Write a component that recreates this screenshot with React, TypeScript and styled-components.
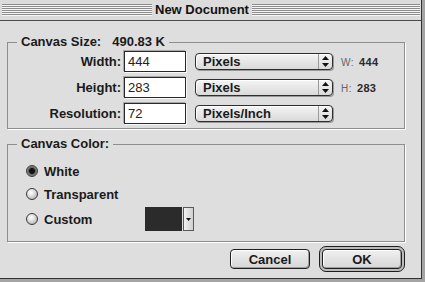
import React from "react";
import styled, { createGlobalStyle } from "styled-components";

const Global = createGlobalStyle`
  html, body { margin: 0; padding: 0; background: #a4a4a4; }
  body {
    width: 425px; height: 282px; overflow: hidden;
    font-family: "Liberation Sans", Arial, sans-serif;
    -webkit-font-smoothing: antialiased;
  }
  * { box-sizing: border-box; }
`;

const Screen = styled.div`
  width: 425px;
  height: 282px;
  background: #a4a4a4;
  display: flex;
  align-items: flex-start;
`;

const Window = styled.div`
  width: 422px;
  height: 279px;
  background: #dedede;
  border-right: 1px solid #333;
  border-bottom: 1px solid #333;
  display: flex;
  flex-direction: column;
`;

const TitleBar = styled.div`
  height: 21px;
  flex: none;
  display: grid;
  grid-template-columns: 150px auto 1fr;
  align-items: center;
  padding: 0 1px 0 2px;
  background: #dcdcdc;
  border-bottom: 1px solid #4a4a4a;
`;

const Stripes = styled.div`
  height: 12px;
  margin-top: 0px;
  background: repeating-linear-gradient(
    to bottom,
    #8c8c8c 0px,
    #8c8c8c 1px,
    #f6f6f6 1px,
    #f6f6f6 2px
  );
`;

const Title = styled.div`
  padding: 0 3px;
  font-size: 13px;
  font-weight: bold;
  color: #111;
  line-height: 14px;
  white-space: nowrap;
`;

const Body = styled.div`
  flex: 1;
  display: flex;
  flex-direction: column;
  padding: 14px 16px 0 7px;
`;

const Group = styled.fieldset<{ $gapTop?: number }>`
  margin: ${(p) => p.$gapTop ?? 0}px 0 0 0;
  padding: 2px 0 4px 0;
  border: 1px solid #8e8e8e;
  box-shadow: 1px 1px 0 #ffffff;
  min-width: 0;
`;

const Legend = styled.legend`
  margin-left: 9px;
  padding: 0 4px;
  font-size: 13px;
  font-weight: bold;
  line-height: 14px;
  color: #1a1a1a;
  white-space: nowrap;
`;

const LegendValue = styled.span`
  margin-left: 11px;
`;

const Rows = styled.div`
  display: flex;
  flex-direction: column;
  gap: 5px;
`;

const Row = styled.div`
  display: flex;
  align-items: center;
  height: 21px;
`;

const FieldLabel = styled.label`
  width: 113px;
  text-align: right;
  font-size: 13px;
  font-weight: bold;
  color: #1a1a1a;
`;

const TextField = styled.input`
  margin-left: 3px;
  width: 62px;
  height: 21px;
  border: 1px solid #2a2a2a;
  background: #ffffff;
  padding: 0 3px;
  font-family: "Liberation Sans", Arial, sans-serif;
  font-size: 13px;
  color: #222;
  outline: none;
  box-shadow: -1px -1px 0 #a8a8a8, 1px 1px 0 #f8f8f8;
`;

const Popup = styled.div`
  margin-left: 9px;
  width: 138px;
  height: 17px;
  border: 1px solid #2e2e2e;
  border-radius: 4px;
  background: linear-gradient(#f4f4f4, #dadada);
  box-shadow: 1px 1px 0 #9a9a9a, inset 1px 1px 0 #ffffff;
  display: flex;
  align-items: center;
`;

const PopupText = styled.span`
  flex: 1;
  padding-left: 7px;
  font-size: 13px;
  font-weight: bold;
  color: #1a1a1a;
  line-height: 15px;
`;

const PopupArrows = styled.span`
  width: 14px;
  height: 100%;
  border-left: 1px solid #9a9a9a;
  display: flex;
  align-items: center;
  justify-content: center;
`;

const Info = styled.span`
  margin-left: 8px;
  font-size: 10px;
  color: #666;
  letter-spacing: 0.5px;
`;

const InfoValue = styled.b`
  margin-left: 5px;
  font-size: 11px;
  color: #2a2a2a;
  letter-spacing: 0.3px;
`;

const RadioList = styled.div`
  display: flex;
  flex-direction: column;
  gap: 3px;
  padding: 8px 0 6px 18px;
`;

const RadioRow = styled.div<{ $h: number }>`
  display: grid;
  grid-template-columns: 12px 95px auto;
  column-gap: 6px;
  align-items: center;
  height: ${(p) => p.$h}px;
`;

const Radio = styled.span<{ $on?: boolean }>`
  width: 12px;
  height: 12px;
  border-radius: 50%;
  border: 1px solid #3a3a3a;
  background: ${(p) =>
    p.$on
      ? "radial-gradient(circle at 50% 50%, #111 0 2.6px, #5a5a5a 3.2px, #8a8a8a 5px, #b0b0b0 100%)"
      : "radial-gradient(circle at 40% 35%, #ffffff 0, #e4e4e4 35%, #b4b4b4 80%, #9a9a9a 100%)"};
`;

const RadioLabel = styled.span`
  font-size: 13px;
  font-weight: bold;
  color: #1a1a1a;
  white-space: nowrap;
`;

const ColorWell = styled.div`
  display: flex;
  gap: 1px;
  height: 24px;
`;

const Swatch = styled.div`
  width: 37px;
  height: 24px;
  background: #2b2b2b;
`;

const WellButton = styled.div`
  width: 11px;
  height: 24px;
  border: 1px solid #5a5a5a;
  background: linear-gradient(to right, #f2f2f2, #cfcfcf);
  display: flex;
  align-items: center;
  justify-content: center;
`;

const ButtonRow = styled.div`
  margin-top: 4px;
  display: flex;
  justify-content: flex-end;
  align-items: center;
  gap: 9px;
`;

const Button = styled.button`
  width: 80px;
  height: 20px;
  padding: 0;
  border: 1px solid #1e1e1e;
  border-radius: 4px;
  background: linear-gradient(#f0f0f0, #d6d6d6);
  box-shadow: inset 1px 1px 0 #ffffff, inset -1px -1px 0 #a0a0a0;
  font-family: "Liberation Sans", Arial, sans-serif;
  font-size: 13px;
  font-weight: bold;
  color: #1a1a1a;
`;

const DefaultRing = styled.div`
  padding: 2px;
  border: 1px solid #1e1e1e;
  border-radius: 7px;
  background: #bcbcbc;
  display: flex;
`;

const UpDown = () => (
  <svg width="7" height="11" viewBox="0 0 7 11">
    <path d="M3.5 0 L7 4 L0 4 Z" fill="#111" />
    <path d="M0 7 L7 7 L3.5 11 Z" fill="#111" />
  </svg>
);

const Down = () => (
  <svg width="5" height="3" viewBox="0 0 5 3">
    <path d="M0 0 L5 0 L2.5 3 Z" fill="#111" />
  </svg>
);

const sizeRows = [
  { label: "Width:", value: "444", unit: "Pixels", info: ["W:", "444"] },
  { label: "Height:", value: "283", unit: "Pixels", info: ["H:", "283"] },
  { label: "Resolution:", value: "72", unit: "Pixels/Inch", info: null },
];

export default function App() {
  return (
    <Screen>
      <Global />
      <Window>
        <TitleBar>
          <Stripes />
          <Title>New Document</Title>
          <Stripes />
        </TitleBar>
        <Body>
          <Group>
            <Legend>
              Canvas Size:<LegendValue>490.83 K</LegendValue>
            </Legend>
            <Rows>
              {sizeRows.map((r) => (
                <Row key={r.label}>
                  <FieldLabel>{r.label}</FieldLabel>
                  <TextField value={r.value} readOnly />
                  <Popup>
                    <PopupText>{r.unit}</PopupText>
                    <PopupArrows>
                      <UpDown />
                    </PopupArrows>
                  </Popup>
                  {r.info && (
                    <Info>
                      {r.info[0]}
                      <InfoValue>{r.info[1]}</InfoValue>
                    </Info>
                  )}
                </Row>
              ))}
            </Rows>
          </Group>
          <Group $gapTop={8}>
            <Legend>Canvas Color:</Legend>
            <RadioList>
              <RadioRow $h={20}>
                <Radio $on />
                <RadioLabel>White</RadioLabel>
              </RadioRow>
              <RadioRow $h={20}>
                <Radio />
                <RadioLabel>Transparent</RadioLabel>
              </RadioRow>
              <RadioRow $h={24}>
                <Radio />
                <RadioLabel>Custom</RadioLabel>
                <ColorWell>
                  <Swatch />
                  <WellButton>
                    <Down />
                  </WellButton>
                </ColorWell>
              </RadioRow>
            </RadioList>
          </Group>
          <ButtonRow>
            <Button>Cancel</Button>
            <DefaultRing>
              <Button>OK</Button>
            </DefaultRing>
          </ButtonRow>
        </Body>
      </Window>
    </Screen>
  );
}
